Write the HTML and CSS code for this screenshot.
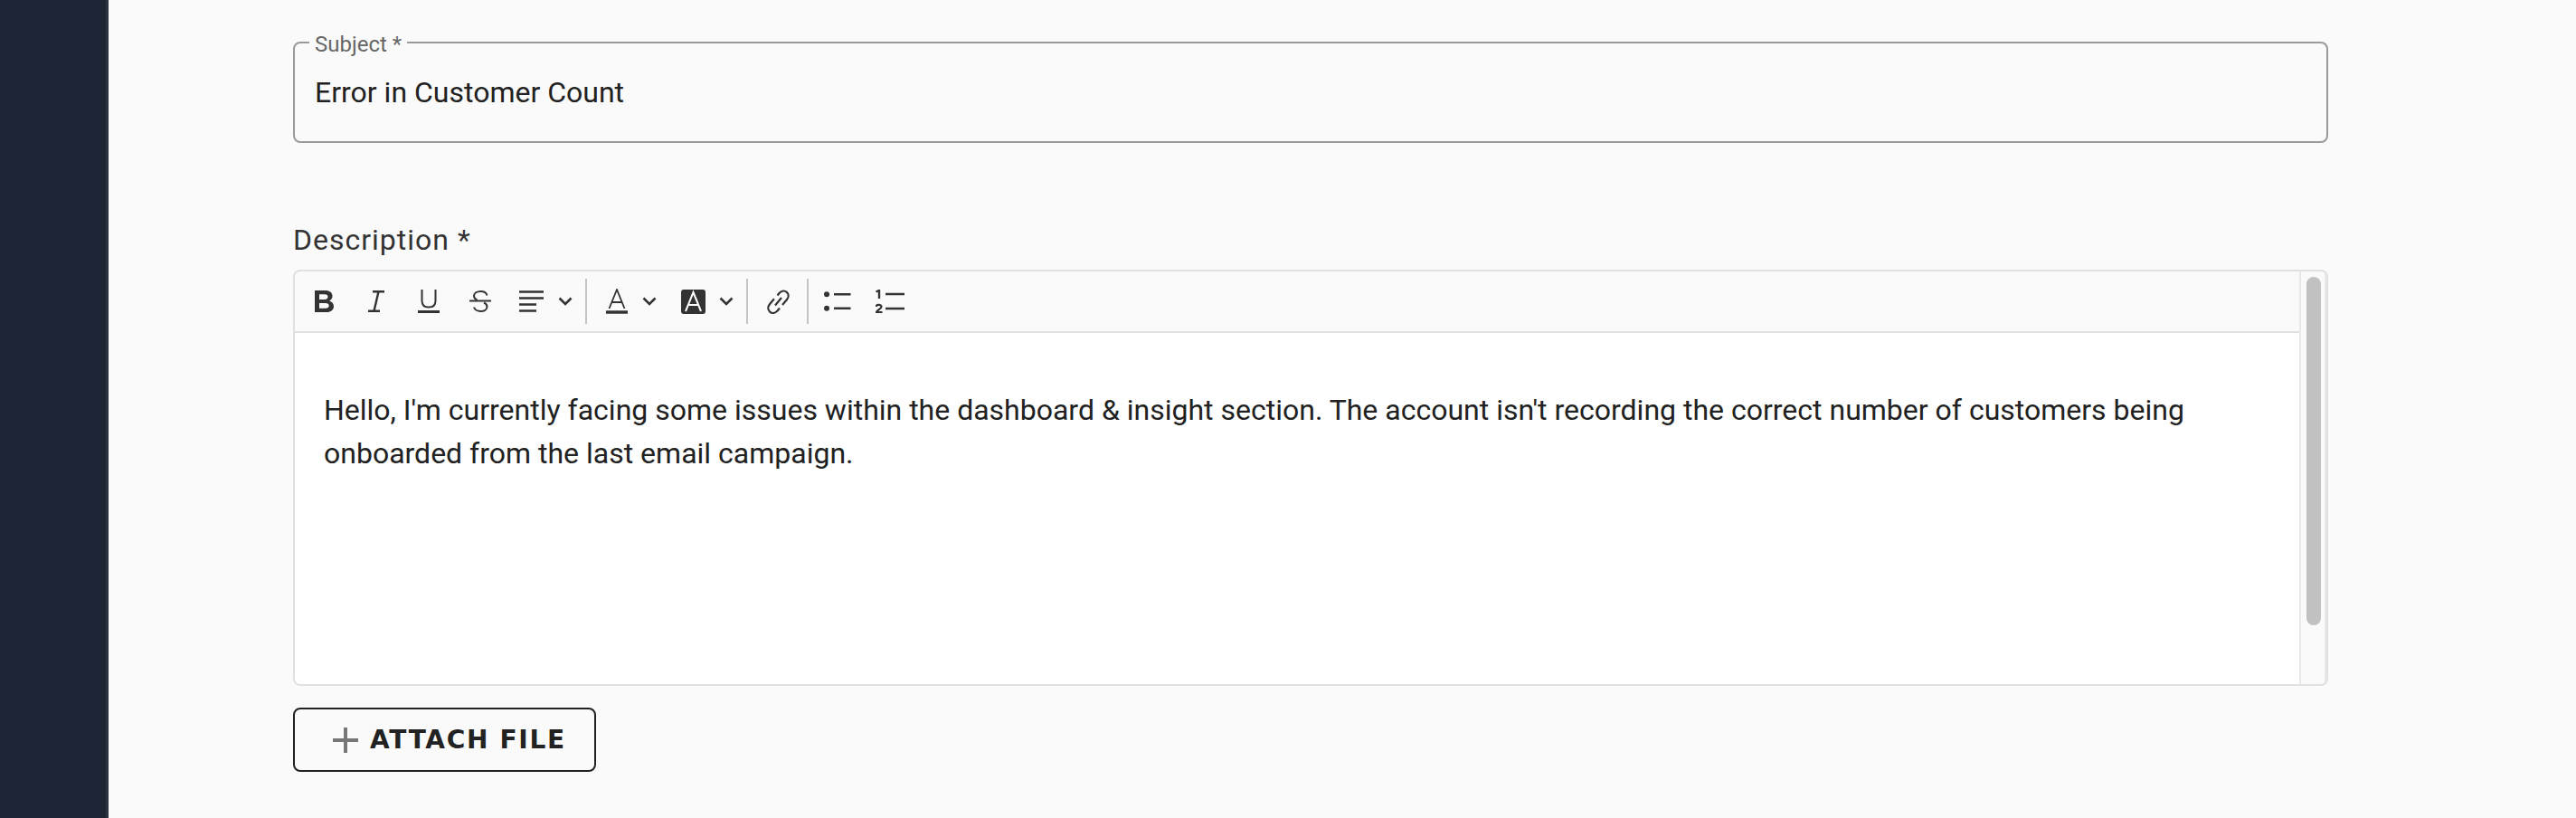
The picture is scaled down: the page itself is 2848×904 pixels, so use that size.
FILE: index.html
```html
<!DOCTYPE html>
<html lang="en">
<head>
    <meta charset="UTF-8">
    <meta name="viewport" content="width=device-width, initial-scale=1.0">
    <title>New Ticket</title>
    <link rel="stylesheet" href="styles.css">
</head>
<body>
    <aside class="sidebar"></aside>

    <main class="content">
        <fieldset class="subject-field">
            <legend>Subject *</legend>
            <div class="subject-value">Error in Customer Count</div>
        </fieldset>

        <div class="field-label">Description *</div>

        <div class="editor">
            <div class="editor-main">
                <div class="toolbar">
                    <svg class="tool tool-bold" width="21" height="24" viewBox="0 0 21 24"><path d="M0 0h11.500c5 0 8 2.400 8 6.200 0 2.400-1.200 4.200-3.300 5.200 2.900.9 4.800 3 4.800 6 0 4-3.300 6.600-8.700 6.600H0z M5 4.200v5.700h6c2.300 0 3.500-1 3.500-2.850S13.300 4.200 11 4.200z M5 13.900v5.900h6.800c2.500 0 3.900-1.050 3.900-2.950s-1.400-2.950-3.900-2.950z" fill="#333" fill-rule="evenodd"/></svg>
                    <svg class="tool tool-italic" width="18" height="24" viewBox="0 0 18 24"><path d="M5 1.300h13M0 22.700h13M11.500 1.300l-5 21.400" fill="none" stroke="#333" stroke-width="2.400"/></svg>
                    <svg class="tool tool-underline" width="24" height="26" viewBox="0 0 24 26"><path d="M4.500 0v12.500c0 4.600 2.700 7 7.500 7s7.500-2.400 7.500-7V0" fill="none" stroke="#333" stroke-width="2"/><path d="M0 24.500h24" stroke="#333" stroke-width="3"/></svg>
                    <svg class="tool tool-strike" width="24" height="24" viewBox="0 0 24 24"><path d="M19.500 5.500C18.800 2.800 16 1 12.500 1 8.300 1 5 3 5 6c0 2.200 1.300 3.700 3.500 4.500M16 13.500c2.300 1 3.500 2.600 3.500 4.500 0 3-3 5-7 5-3.700 0-6.500-1.700-7.500-4.500" fill="none" stroke="#333" stroke-width="2"/><path d="M0 11.500h24" stroke="#333" stroke-width="2"/></svg>
                    <svg class="tool tool-align" width="27" height="24" viewBox="0 0 27 24"><path d="M0 1.500h27M0 8.500h27M0 15.500h19M0 22.500h19" stroke="#333" stroke-width="2.400"/></svg>
                    <svg class="chevron chevron-align" width="16" height="10" viewBox="0 0 16 10"><path d="M1.500 1.500L8 8l6.500-6.500" fill="none" stroke="#333" stroke-width="2.600"/></svg>
                    <span class="divider divider-first"></span>
                    <svg class="tool tool-color" width="24" height="28" viewBox="0 0 24 28"><path d="M3.500 22L12 1l8.500 21M6.500 15h11" fill="none" stroke="#333" stroke-width="1.800"/><path d="M0 26h24" stroke="#333" stroke-width="3.400"/></svg>
                    <svg class="chevron chevron-color" width="16" height="10" viewBox="0 0 16 10"><path d="M1.500 1.500L8 8l6.500-6.500" fill="none" stroke="#333" stroke-width="2.600"/></svg>
                    <svg class="tool tool-bg" width="27" height="27" viewBox="0 0 27 27"><rect width="27" height="27" rx="3" fill="#333"/><path d="M5 24L13.500 3 22 24M8 17h11" fill="none" stroke="#fff" stroke-width="2"/></svg>
                    <svg class="chevron chevron-bg" width="16" height="10" viewBox="0 0 16 10"><path d="M1.500 1.500L8 8l6.500-6.500" fill="none" stroke="#333" stroke-width="2.600"/></svg>
                    <span class="divider divider-second"></span>
                    <svg class="tool tool-link" width="25" height="27" viewBox="0 0 25 27"><path d="M9 17.500l7-8.500M11.500 6.500l2-2.500c2.500-3 6-3.200 8.300-1.200 2.300 2 2.500 5.400.2 8.200l-5 6M14 20.500l-2.500 3c-2.500 2.800-6 3-8.300 1.100-2.300-2-2.600-5.400-.3-8.300l5-6" fill="none" stroke="#333" stroke-width="2.200"/></svg>
                    <span class="divider divider-third"></span>
                    <svg class="tool tool-bullets" width="30" height="22" viewBox="0 0 30 22"><circle cx="3" cy="3.200" r="3" fill="#333"/><circle cx="3" cy="18.800" r="3" fill="#333"/><path d="M11 3.200h18.500M11 18.800h18.500" stroke="#333" stroke-width="2.400"/></svg>
                    <svg class="tool tool-numbers" width="32" height="26" viewBox="0 0 32 26"><path d="M.5 2.500L4 1v9" fill="none" stroke="#333" stroke-width="2.400"/><path d="M.5 19c.3-2.700 6-2.800 6 0 0 2.300-4.500 3.300-5.500 6h6.500" fill="none" stroke="#333" stroke-width="2.200"/><path d="M11 5h21M11 21h21" stroke="#333" stroke-width="2.400"/></svg>
                </div>
                <div class="editor-body">
                    <p>Hello, I'm currently facing some issues within the dashboard &amp; insight section. The account isn't recording the correct number of customers being onboarded from the last email campaign.</p>
                </div>
            </div>
            <div class="scroll-track">
                <div class="scroll-thumb"></div>
            </div>
        </div>

        <button class="attach-button">
            <svg width="28" height="28" viewBox="0 0 28 28"><path d="M0 14h28M14 0v28" stroke="#777" stroke-width="4"/></svg>
            ATTACH FILE
        </button>
    </main>
</body>
</html>
```

FILE: styles.css
```css
* {
    box-sizing: border-box;
}
body {
    margin: 0;
    display: flex;
    height: 904px;
    overflow: hidden;
    background-color: #fafafa;
    font-family: Roboto, sans-serif;
    color: #212121;
}
.sidebar {
    width: 120px;
    flex-shrink: 0;
    background-color: #1e2635;
    border-right: 3px solid #2a3240;
}
.content {
    flex: 1;
    padding-left: 204px;
}

/* subject */
.subject-field {
    width: 2250px;
    height: 125px;
    margin: 33px 0 0;
    padding: 0 22px;
    border: 2px solid #9a9a9a;
    border-radius: 8px;
}
.subject-field legend {
    padding: 4px 6px 0;
    margin-left: -6px;
    font-size: 24px;
    line-height: 24px;
    color: #666;
}
.subject-value {
    margin-top: 17px;
    font-size: 32px;
    line-height: 48px;
}

/* description */
.field-label {
    margin-top: 88px;
    font-size: 32px;
    line-height: 38px;
    letter-spacing: 1px;
    color: #333;
}
.editor {
    display: flex;
    width: 2250px;
    height: 460px;
    margin-top: 14px;
    border: 2px solid #e0e0e0;
    border-radius: 8px;
    overflow: hidden;
}
.editor-main {
    flex: 1;
    display: flex;
    flex-direction: column;
    border-right: 2px solid #e8e8e8;
}
.toolbar {
    display: flex;
    align-items: center;
    height: 68px;
    flex-shrink: 0;
    padding-left: 22px;
    border-bottom: 2px solid #e0e0e0;
}
.tool, .chevron {
    flex-shrink: 0;
}
.tool-italic { margin-left: 38px; }
.tool-underline { margin-left: 37px; }
.tool-strike { margin-left: 33px; }
.tool-align { margin-left: 31px; }
.chevron-align { margin-left: 16px; }
.divider {
    width: 2px;
    height: 50px;
    background-color: #c4c4c4;
}
.divider-first { margin-left: 14px; }
.tool-color { margin-left: 21px; }
.chevron-color { margin-left: 16px; }
.tool-bg { margin-left: 27px; }
.chevron-bg { margin-left: 15px; }
.divider-second { margin-left: 14px; }
.tool-link { margin-left: 21px; }
.divider-third { margin-left: 19px; }
.tool-bullets { margin-left: 17px; }
.tool-numbers { margin-left: 27px; }

.editor-body {
    flex: 1;
    padding: 61px 32px 0;
    background-color: #fff;
}
.editor-body p {
    margin: 0;
    font-size: 32px;
    line-height: 48px;
}
.scroll-track {
    width: 28px;
    flex-shrink: 0;
    padding: 6px 0 0 6px;
    border-right: 2px solid #e8e8e8;
}
.scroll-thumb {
    width: 16px;
    height: 385px;
    border-radius: 8px;
    background-color: #c1c1c1;
}

/* attach button */
.attach-button {
    display: flex;
    align-items: center;
    gap: 13px;
    width: 335px;
    height: 71px;
    margin-top: 24px;
    padding: 0 0 0 42px;
    background: transparent;
    border: 2px solid #222;
    border-radius: 8px;
    font-family: "DejaVu Sans", sans-serif;
    font-size: 28px;
    font-weight: 700;
    letter-spacing: 1.7px;
    color: #222;
}
```
